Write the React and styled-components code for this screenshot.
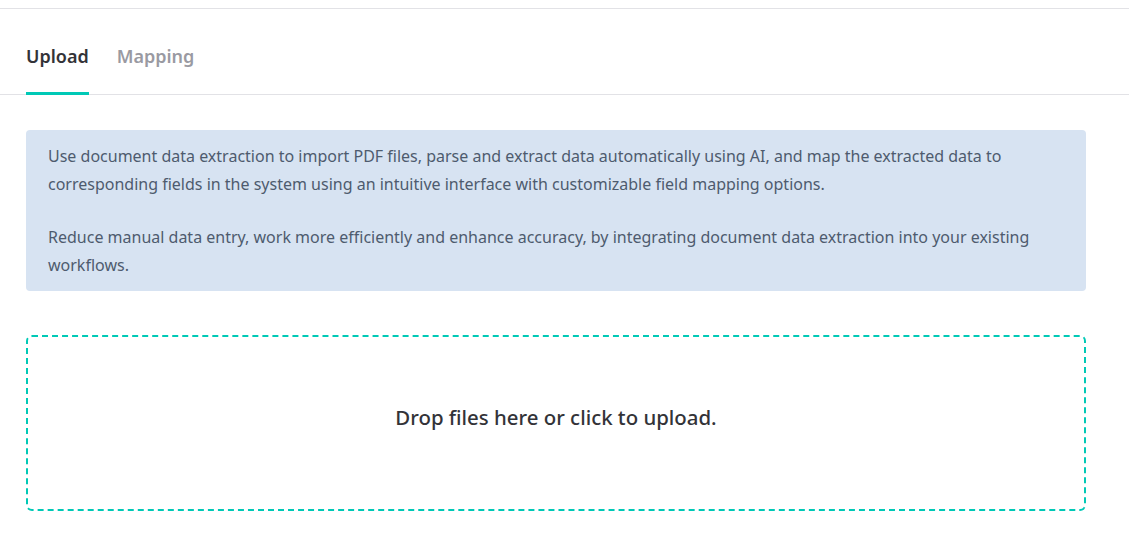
import styled, { createGlobalStyle } from "styled-components";

const Global = createGlobalStyle`
  body {
    margin: 0;
    background: #fff;
    font-family: "Noto Sans", "Open Sans", sans-serif;
  }
  * {
    box-sizing: border-box;
  }
`;

const Page = styled.div`
  padding-top: 8px;
`;

const TabBar = styled.div`
  display: flex;
  gap: 28px;
  padding: 0 26px;
  border-top: 1px solid #e2e2e6;
  border-bottom: 1px solid #e2e2e6;
  height: 87px;
  align-items: stretch;
`;

const Tab = styled.div`
  display: flex;
  align-items: center;
  padding-top: 10px;
  font-size: 18px;
  font-weight: 600;
  color: ${(p) => (p.active ? "#333338" : "#9a9aa2")};
  border-bottom: 3px solid ${(p) => (p.active ? "#00c9b6" : "transparent")};
  margin-bottom: -1px;
  cursor: pointer;
`;

const Content = styled.div`
  width: 1086px;
  padding: 35px 0 0 26px;
  display: flex;
  flex-direction: column;
  gap: 44px;
`;

const Info = styled.div`
  background: #d7e3f2;
  border-radius: 4px;
  padding: 12px 22px;
  color: #4e5b6e;
  font-size: 16px;
  line-height: 28px;

  p {
    margin: 0;
  }
  p + p {
    margin-top: 25px;
  }
`;

const DropZone = styled.div`
  height: 176px;
  padding-bottom: 12px;
  border: 2px dashed #00c9b6;
  border-radius: 6px;
  display: flex;
  align-items: center;
  justify-content: center;
  font-size: 20.4px;
  font-weight: 500;
  color: #333338;
  cursor: pointer;
`;

export default function App() {
  return (
    <Page>
      <Global />
      <TabBar>
        <Tab active>Upload</Tab>
        <Tab>Mapping</Tab>
      </TabBar>
      <Content>
        <Info>
          <p>
            Use document data extraction to import PDF files, parse and extract data automatically using AI, and map the extracted data to
            corresponding fields in the system using an intuitive interface with customizable field mapping options.
          </p>
          <p>
            Reduce manual data entry, work more efficiently and enhance accuracy, by integrating document data extraction into your existing
            workflows.
          </p>
        </Info>
        <DropZone>Drop files here or click to upload.</DropZone>
      </Content>
    </Page>
  );
}
